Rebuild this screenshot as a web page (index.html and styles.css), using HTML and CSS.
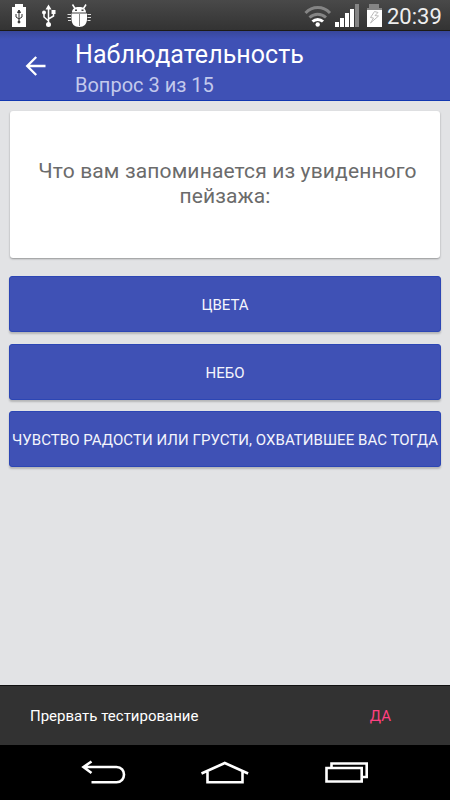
FILE: index.html
```html
<!doctype html>
<html lang="ru">
<head>
<meta charset="utf-8">
<title>Наблюдательность</title>
<link rel="stylesheet" href="styles.css">
</head>

<body>
<div class="status">
	<svg class="left-icons" width="100" height="31" viewBox="0 0 100 31">
		<path fill="#fff" d="M15 4h8v3h3v20H12V7h3z"/>
		<g stroke="#333" fill="none"><path d="M19 12v10M16 14v3l3 2 3-2v-3"/><circle cx="19" cy="22" r="1" fill="#333"/><path d="M17.500 12.500L19 10l1.500 2.500z" fill="#333"/></g>
		<g stroke="#fff" fill="none" stroke-width="1.500"><path d="M48.500 8v16M44 13v4l4.500 4M53.500 12v4l-5 3"/><path fill="#fff" stroke="none" d="M45.500 9.500l3-5 3 5zM51.500 10h4v4h-4z"/><circle cx="44" cy="12.500" r="2" fill="#fff" stroke="none"/><circle cx="48.500" cy="24.500" r="2.500" fill="#fff" stroke="none"/></g>
		<g fill="#fff"><path d="M72 12.500c0-3.500 2.500-5.500 7-5.500s7 2 7 5.500zM71.500 13.500H87V19c0 5-3 8-7.800 8s-7.700-3-7.700-8z"/><path fill="none" stroke="#fff" stroke-width="1.500" d="M75 8.500l-2.500-4M83.500 8.500l2.500-4"/><path fill="none" stroke="#ddd" d="M67.500 14.500H71M67.500 17.500H71M68 20.500h3M87.500 14.500H91M87.500 17.500H91M87.500 20.500h3"/></g>
		<path fill="none" stroke="#888" d="M79.500 14v12"/>
		<path fill="#444" d="M75 9.500h2V11h-2zM81.500 9.500h2V11h-2z"/>
	</svg>
	<svg class="right-icons" width="80" height="31" viewBox="304 0 80 31">
		<g fill="none" stroke-width="3"><path stroke="#858585" d="M305.500 13c7-7.300 17.500-7.300 24.500 0M309.500 17.500c5-4.500 11.500-4.500 16.500 0"/><path stroke="#fff" d="M312.500 21.500c3-2.800 7.500-2.800 10.500 0"/></g>
		<circle cx="317.700" cy="24.500" r="2.200" fill="#fff"/>
		<path fill="#fff" d="M335 22h4v5h-4zM340 18h4v9h-4zM345 13h4v14h-4zM350 9h4v18h-4z"/>
		<path fill="#858585" d="M355 4h4v23h-4zM369 4h10v4h3v4h-15V8h2z"/>
		<path fill="#fff" d="M367 10h15v17h-15z"/>
		<path fill="none" stroke="#bbb" d="M374.500 11.500l-4 6 3 .500-3 5 8-7-3.500-.500 3-3z"/>
	</svg>
	<span class="clock">20:39</span>
</div>

<div class="toolbar">
	<svg class="back" width="22" height="22" viewBox="0 0 22 22"><path d="M20.500 11H2.500M11.200 2L2.200 11l9 9"/></svg>
	<div>
		<h1>Наблюдательность</h1>
		<p>Вопрос 3 из 15</p>
	</div>
</div>

<div class="content">
	<div class="card">Что вам запоминается из увиденного пейзажа:</div>
	<button>ЦВЕТА</button>
	<button>НЕБО</button>
	<button class="long">ЧУВСТВО РАДОСТИ ИЛИ ГРУСТИ, ОХВАТИВШЕЕ ВАС ТОГДА</button>
</div>

<div class="snackbar">
	<span class="message">Прервать тестирование</span>
	<span class="action">ДА</span>
</div>

<div class="navbar">
	<svg width="450" height="55" viewBox="0 745 450 55">
		<path d="M91.500 761.500L83.500 767l8 6M84 767h32.500c10 0 10 15.200 0 15.200H91.500"/>
		<path d="M201.500 773.500l23.300-10.500 23.300 10.500M207.500 772v10.200h35V772"/>
		<path d="M326.500 768h35.200v13.500h-35.200zM331.500 768v-4.500h35.200V777h-5"/>
	</svg>
</div>
</body>
</html>
```
FILE: styles.css
```css
*{margin:0; padding:0; box-sizing:border-box;}
body{width:450px; height:800px; display:flex; flex-direction:column; overflow:hidden; background:#e2e3e5; font-family:Roboto,sans-serif;}
.status{height:31px; flex:none; display:flex; background:linear-gradient(#494949,#333); border-bottom:1px solid #1c1a16;}
.left-icons{margin-right:204px;}
.clock{margin-left:3px; font-size:22px; line-height:33px; color:#eee; white-space:nowrap;}
.toolbar{height:70px; flex:none; display:flex; padding:9px 0 0 25px; background:linear-gradient(#38479c,#3f51b5 8px); border-bottom:1px solid #1238b0;}
.back{margin:15px 28px 0 0; fill:none; stroke:#fff; stroke-width:2.3;}
.toolbar h1{font-size:25px; font-weight:400; line-height:30px; letter-spacing:.05px; color:#fff;}
.toolbar p{font-size:20px; line-height:30px; color:#c3c9ec;}
.content{flex:1; display:flex; flex-direction:column; padding:10px 9px 0;}
.card{height:147px; margin:0 1px 18px; padding:48px 20px 0; background:#fff; border-radius:3px; box-shadow:0 1px 2px rgba(0,0,0,.35); font-size:21px; line-height:24.6px; letter-spacing:.14px; text-align:center; text-indent:5px; color:#6b6b6b;}
button{height:56px; margin-bottom:11.5px; border:1px solid #2c46b4; border-radius:3px; background:#3f51b5; box-shadow:0 2px 2px rgba(0,0,0,.2); font:15px/56px Roboto,sans-serif; color:#f4f5fc; white-space:nowrap;}
.long{letter-spacing:.05px;}
.snackbar{height:60px; flex:none; display:flex; justify-content:space-between; padding:1px 59px 0 30px; background:#323232; border-top:1px solid #111; font-size:15px; line-height:59px; color:#fff;}
.action{color:#ff4081;}
.navbar{height:55px; flex:none; background:#000;}
.navbar svg{display:block; fill:none; stroke:#fff; stroke-width:2.6;}
```
